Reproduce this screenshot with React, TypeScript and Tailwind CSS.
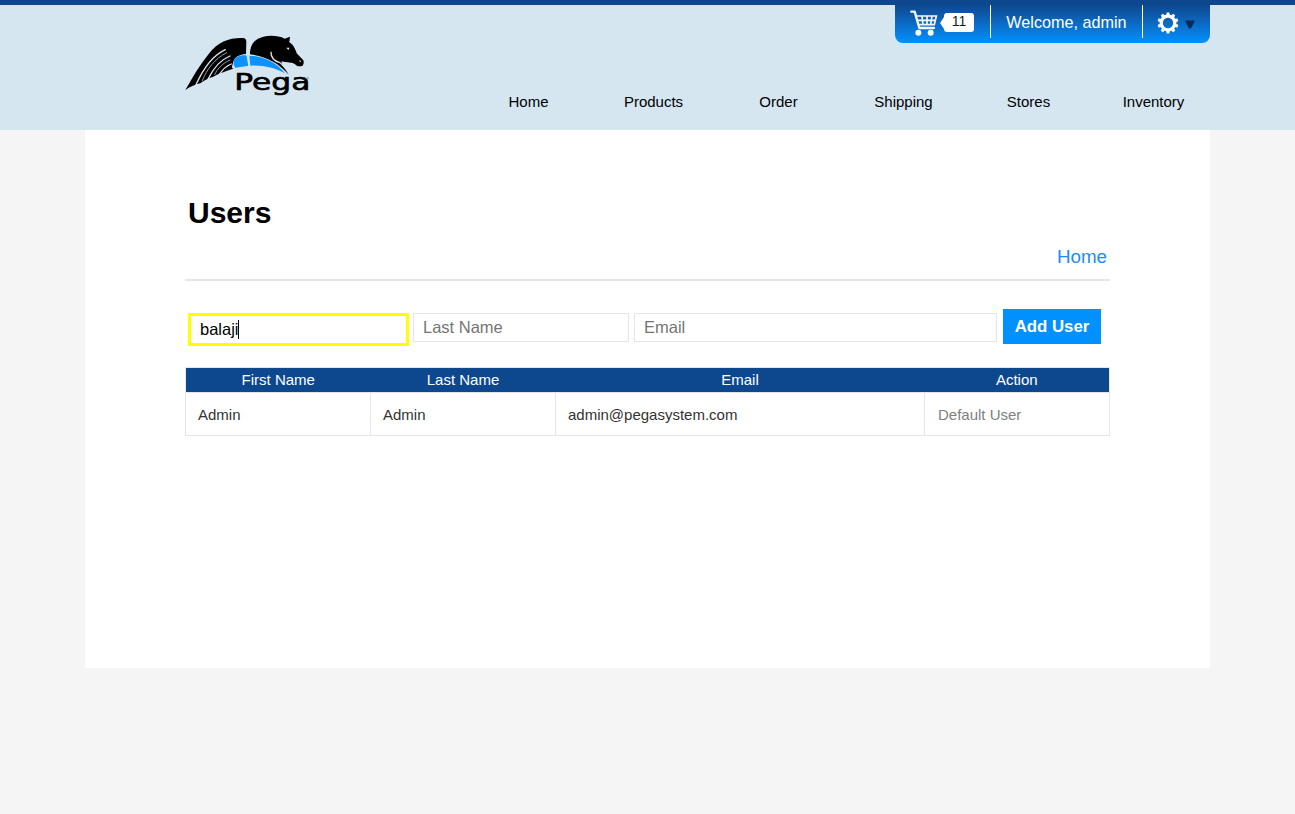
import React from "react";

const NAV = ["Home", "Products", "Order", "Shipping", "Stores", "Inventory"];

function Logo() {
  return (
    <svg className="block h-[70px] w-[140px]" viewBox="0 0 420 210" role="img" aria-label="Pega">
      <path d="M16 180 C38 143 58 106 86 72 C114 34 152 22 190 24 C197 25 199 29 199 36 L198 72 C175 74 161 82 158 102 C156 110 154 113 160 116 C146 120 136 124 126 128 C118 130 108 135 98 141 C86 144 72 151 61 160 C46 163 32 170 16 180Z" />
      <g fill="none" stroke="#d5e6f1" strokeLinecap="round">
        <path d="M48 164 C68 120 94 78 136 59" strokeWidth="4" />
        <path d="M84 148 C98 118 118 91 150 78" strokeWidth="4" />
        <path d="M118 134 C127 119 139 108 154 102" strokeWidth="4" />
        <path d="M67 152 C80 118 104 86 140 68" strokeWidth="2" />
        <path d="M104 134 C112 116 128 99 150 90" strokeWidth="2" />
      </g>
      <path d="M161 94 C165 80 180 75 201 76 L206 107 L166 113 C161 107 160 100 161 94Z" fill="#0d91fb" />
      <path d="M208 77 C246 77 291 97 315 130 C283 112 246 104 211 107Z" fill="#0d91fb" />
      <path d="M201 74 L207 108" fill="none" stroke="#d5e6f1" strokeWidth="4" />
      <path d="M210 73 C210 46 222 27 250 20 C272 15 298 18 314 26 L330 20 L328 37 C340 45 345 54 350 70 L370 91 C373 99 370 107 363 109 C356 108 352 110 347 104 C336 96 322 98 304 94 C307 109 318 120 326 134 C294 96 254 78 210 73Z" />
      <path d="M273 65 C272 82 283 94 298 97 C304 100 308 106 316 114" fill="none" stroke="#d5e6f1" strokeWidth="4" />
      <path d="M319 53 l10 0 l-4 7z M357 91 l7 2 l-4 4z" fill="#d5e6f1" />
      <text x="163" y="180" fontFamily="DejaVu Sans, sans-serif" fontSize="71" textLength="228" lengthAdjust="spacingAndGlyphs" stroke="#000" strokeWidth="2">
        Pega
      </text>
      <circle cx="383" cy="145" r="3" fill="none" stroke="#667781" strokeWidth="1.5" />
    </svg>
  );
}

function Cart() {
  return (
    <svg className="block h-[27px] w-[28px]" viewBox="0 0 84 81" fill="none" stroke="#f4f8fc" aria-hidden="true">
      <path d="M4 5 H14 L28 54 H72" strokeWidth="7" strokeLinecap="round" strokeLinejoin="round" />
      <path d="M17 18 H79 L73 44 H25 M21 31 H76 M36 18 L39 44 M51 18 V44 M66 18 L62 44" strokeWidth="5" />
      <circle cx="25" cy="68" r="9" fill="#fff" stroke="none" />
      <circle cx="62" cy="68" r="9" fill="#fff" stroke="none" />
    </svg>
  );
}

const TEETH = [0, 36, 72, 108, 144, 180, 216, 252, 288, 324];

function Gear() {
  return (
    <svg className="block h-[22px] w-[22px]" viewBox="-11 -11 22 22" aria-hidden="true">
      <circle r="6.8" fill="none" stroke="#fff" strokeWidth="3.2" />
      {TEETH.map((a) => (
        <path key={a} d="M-1.8 -8 L-1.3 -10.4 H1.3 L1.8 -8Z" fill="#fff" transform={`rotate(${a})`} />
      ))}
    </svg>
  );
}

export default function App() {
  return (
    <div className="h-[814px] overflow-hidden bg-[#f5f5f5] font-['Liberation_Sans',Arial,sans-serif] text-black">
      <header className="h-[130px] border-t-[5px] border-[#0d488f] bg-[#d5e6f1]">
        <div className="mx-auto flex h-full w-[1125px] justify-between">
          <div className="pt-[25px] pl-[95px]">
            <Logo />
          </div>
          <div className="flex w-[744px] flex-col items-end">
            <div className="flex h-[38px] w-[315px] rounded-b-[8px] bg-linear-to-b from-[#0d488f] to-[#0091ff] text-white">
              <div className="flex h-[33px] w-[96px] border-r border-white pt-[5px] pl-[15px]">
                <Cart />
                <div className="mt-[3px] ml-[2px] flex h-[19px] items-center">
                  <svg className="h-[12px] w-[4px]" viewBox="0 0 4 12" aria-hidden="true">
                    <path d="M4 0 L0 6 L4 12Z" fill="#fff" />
                  </svg>
                  <span className="flex h-[19px] w-[30px] items-center justify-center rounded-[3px] bg-white pb-[3px] text-[14px] leading-[16px] text-[#111b2c]">11</span>
                </div>
              </div>
              <div className="flex h-[33px] w-[152px] items-center justify-center border-r border-white pt-[2px] text-[16.2px]">Welcome, admin</div>
              <div className="flex pt-[7px] pl-[14px]">
                <Gear />
                <svg className="mt-[8px] ml-[6px] h-[9px] w-[10px]" viewBox="0 0 10 9" aria-hidden="true">
                  <path d="M0 0.5 H10 L6 8.5 H4Z" fill="#0b2a58" />
                </svg>
              </div>
            </div>
            <nav className="mt-[48px] flex w-[744px]">
              {NAV.map((item) => (
                <a key={item} className="w-[125px] shrink-0 text-center text-[15px] leading-[22px]">
                  {item}
                </a>
              ))}
            </nav>
          </div>
        </div>
      </header>

      <main className="mx-auto h-[538px] w-[1125px] bg-white px-[100px] pt-[62px]">
        <h1 className="h-[42px] pl-[3px] text-[30px] leading-[42px] font-bold">Users</h1>
        <div className="flex h-[47px] justify-end border-b-2 border-[#e6e6e6] pt-[12px] pr-[3px] text-[18.8px] leading-[22px] text-[#1b8cf5]">
          <a>Home</a>
        </div>
        <form className="flex h-[86px] items-start pt-[28px] pl-[3px] text-[16.5px]">
          <div className="mt-[4px] flex h-[33px] w-[221px] items-center border-[3px] border-[#ffff00] pl-[9px]">
            <span>balaji</span>
            <span className="-ml-px h-[19px] w-px bg-black" />
          </div>
          <input className="mt-[4px] ml-[4px] h-[29px] w-[216px] border border-[#e6e6e6] px-[9px] placeholder:text-[#757575]" placeholder="Last Name" />
          <input className="mt-[4px] ml-[5px] h-[29px] w-[363px] border border-[#e6e6e6] px-[9px] placeholder:text-[#757575]" placeholder="Email" />
          <button type="button" className="ml-[6px] h-[35px] w-[98px] bg-[#0091ff] text-[16.8px] font-bold text-white">
            Add User
          </button>
        </form>
        <table className="w-[925px] table-fixed border-collapse text-[15px] text-[#333]">
          <colgroup>
            <col className="w-[185px]" />
            <col className="w-[185px]" />
            <col className="w-[369px]" />
            <col className="w-[185px]" />
          </colgroup>
          <thead>
            <tr className="h-[25px] border border-[#e6e6e6] bg-[#0d488f] leading-[24px] text-white">
              <th className="p-0 font-normal">First Name</th>
              <th className="p-0 font-normal">Last Name</th>
              <th className="p-0 font-normal">Email</th>
              <th className="p-0 font-normal">Action</th>
            </tr>
          </thead>
          <tbody>
            <tr className="h-[43px]">
              <td className="border border-[#e6e6e6] pt-[2px] pb-0 pl-3">Admin</td>
              <td className="border border-[#e6e6e6] pt-[2px] pb-0 pl-3">Admin</td>
              <td className="border border-[#e6e6e6] pt-[2px] pb-0 pl-3">admin@pegasystem.com</td>
              <td className="border border-[#e6e6e6] pt-[2px] pb-0 pl-[13px] text-[#808080]">Default User</td>
            </tr>
          </tbody>
        </table>
      </main>
    </div>
  );
}
